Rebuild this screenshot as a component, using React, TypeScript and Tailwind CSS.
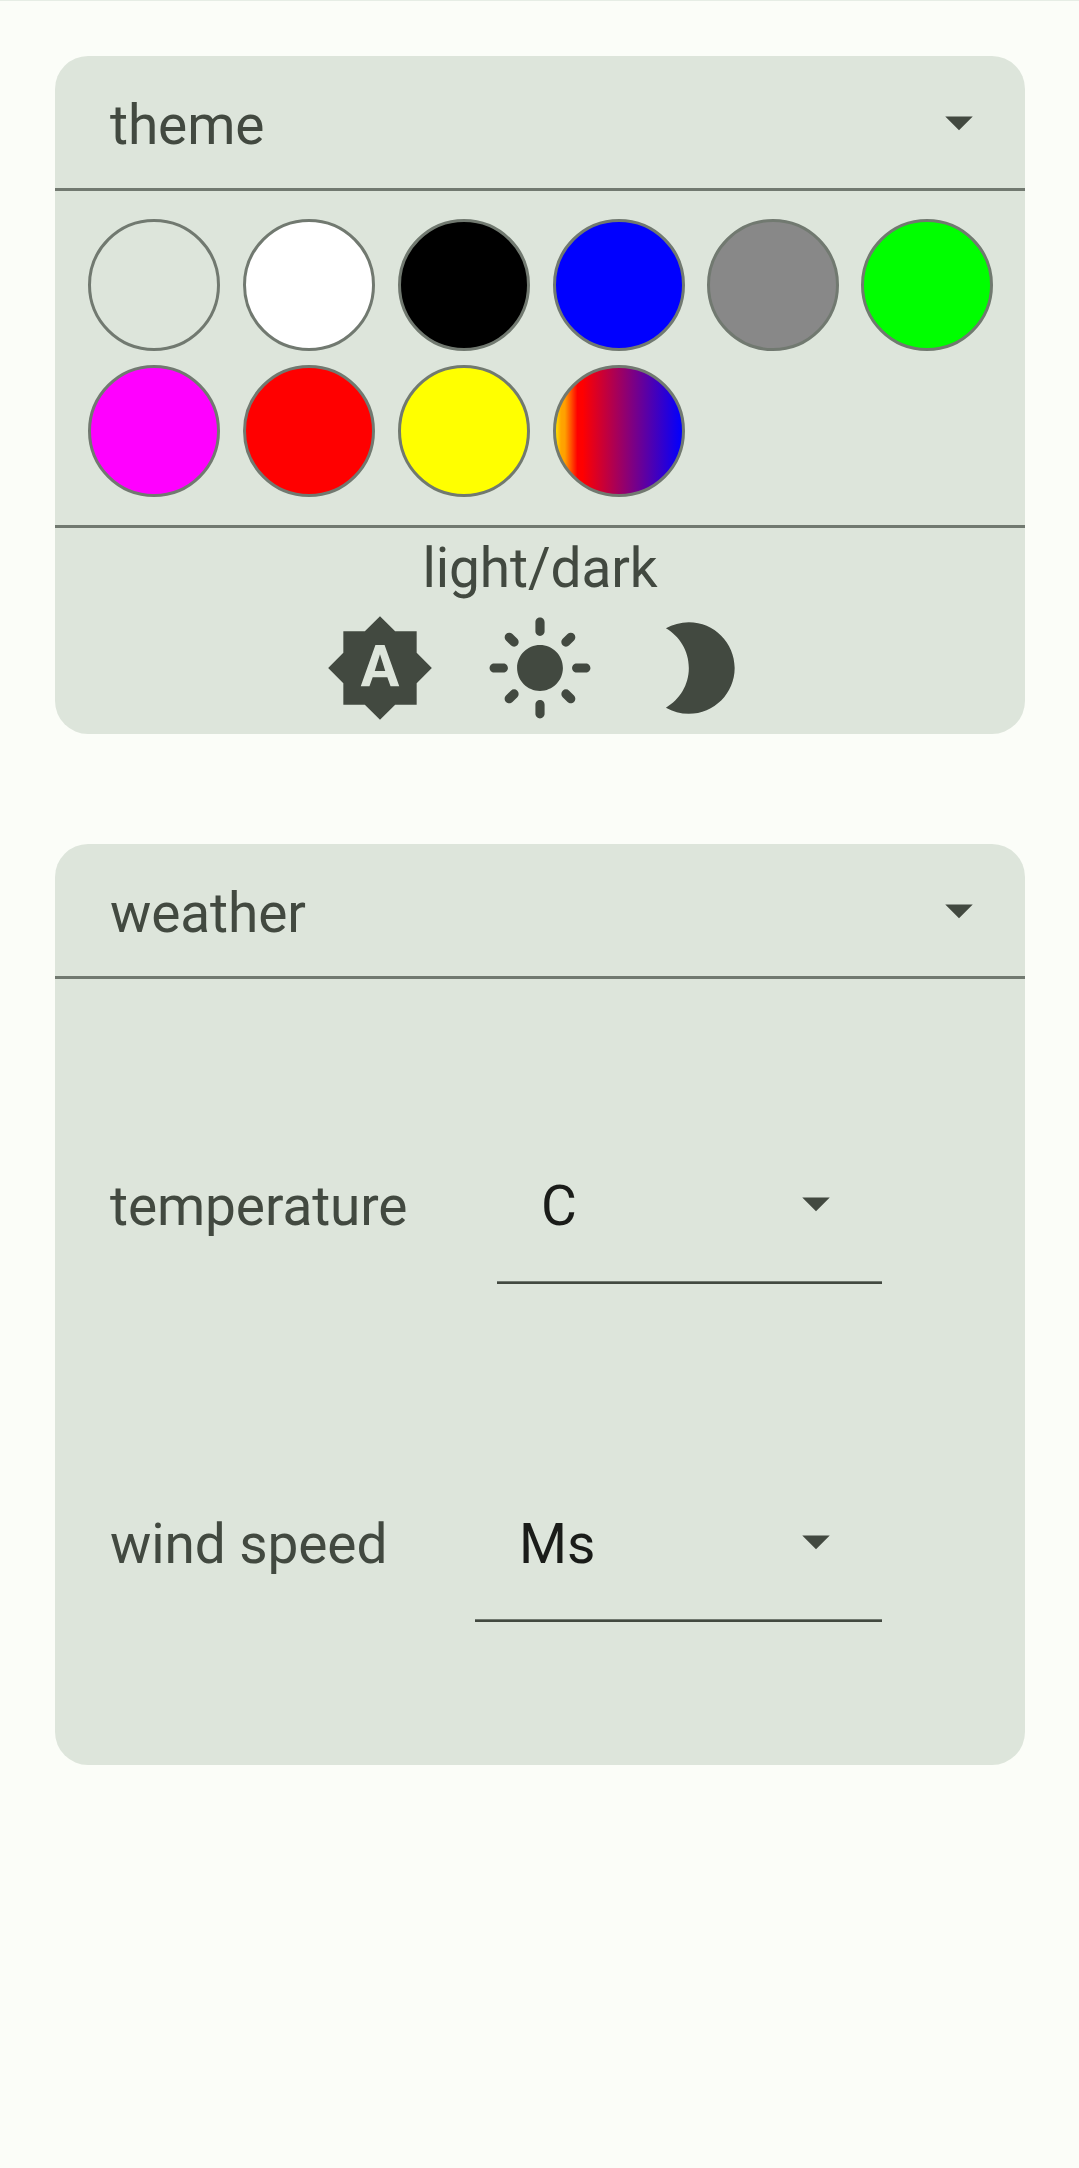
import { MdArrowDropDown, MdBrightness2, MdBrightnessAuto, MdLightMode } from "react-icons/md";

const swatches = [
  "bg-transparent",
  "bg-white",
  "bg-black",
  "bg-[#0000ff]",
  "bg-[#888888]",
  "bg-[#00ff00]",
  "bg-[#ff00ff]",
  "bg-[#ff0000]",
  "bg-[#ffff00]",
  "bg-[linear-gradient(90deg,#ffe000_0%,#ffa500_4%,#ffa000_7%,#ff6000_11%,#ff0000_17%,#ff0000_21%,#800080_60%,#0000ff_100%)]",
];

function Header({ title }: { title: string }) {
  return (
    <button className="flex h-[135px] w-full items-center justify-between border-b-[3px] border-[#717970] pr-[33.5px] pl-[55px] text-left">
      <span className="pt-[6px]">{title}</span>
      <MdArrowDropDown className="size-[66px]" />
    </button>
  );
}

function Field({ label, value, width }: { label: string; value: string; width: string }) {
  return (
    <div className="flex h-[154px] items-center justify-between pr-[143px] pl-[55px]">
      <span className="pb-[2px]">{label}</span>
      <button
        className={`${width} flex h-full items-center justify-between border-b-2 border-[#424940] pr-[33.5px] pl-[44px] shadow-[inset_0_-1px_0_#717970]`}
      >
        <span className="text-[#1a1c19]">{value}</span>
        <MdArrowDropDown className="mb-[7px] size-[66px]" />
      </button>
    </div>
  );
}

export default function App() {
  return (
    <main className="flex min-h-[2168px] w-[1079px] flex-col gap-[110px] border-t border-[#e6ede5] bg-[#fbfdf8] pt-[55px] pr-[54px] pl-[55px] font-[Roboto,sans-serif] text-[55px] leading-[66px] tracking-[-0.1px] text-[#424940]">
      <section className="h-[678px] overflow-hidden rounded-[33px] bg-[#dde5db]">
        <Header title="theme" />
        <div className="grid h-[337px] grid-cols-[155px_155px_155px_154px_154px_132px] content-start gap-y-[14px] border-b-[3px] border-[#717970] pt-[28px] pl-[33px]">
          {swatches.map((fill) => (
            <button key={fill} className={`${fill} size-[132px] rounded-full border-[3px] border-[#717970]`} />
          ))}
        </div>
        <div className="pt-[7px] text-center">light/dark</div>
        <div className="mt-[12px] flex pl-[270px]">
          <MdBrightnessAuto className="mr-[50px] size-[110px]" />
          <MdLightMode className="mr-[48px] size-[110px]" />
          <MdBrightness2 className="size-[110px]" />
        </div>
      </section>
      <section className="h-[921px] overflow-hidden rounded-[33px] bg-[#dde5db]">
        <Header title="weather" />
        <div className="flex flex-col gap-[184px] pt-[151px]">
          <Field label="temperature" value="C" width="w-[385px]" />
          <Field label="wind speed" value="Ms" width="w-[407px]" />
        </div>
      </section>
    </main>
  );
}
